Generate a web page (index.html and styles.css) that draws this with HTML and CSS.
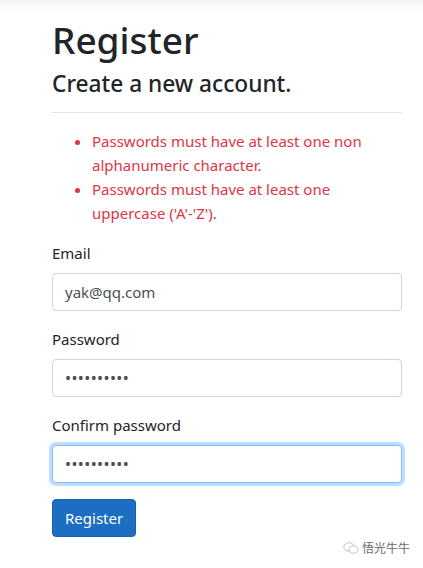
FILE: index.html
```html
<!DOCTYPE html>
<html lang="en">
<head>
<meta charset="utf-8">
<title>Register</title>
<link rel="stylesheet" href="styles.css">
</head>
<body>
<div class="shade"></div>
<main class="page">
  <h1 class="title">Register</h1>
  <h4 class="subtitle">Create a new account.</h4>
  <hr class="rule">
  <ul class="errors">
    <li>Passwords must have at least one non alphanumeric character.</li>
    <li>Passwords must have at least one uppercase ('A'-'Z').</li>
  </ul>
  <div class="group">
    <label class="label">Email</label>
    <div class="input">yak@qq.com</div>
  </div>
  <div class="group">
    <label class="label">Password</label>
    <div class="input dots">••••••••••</div>
  </div>
  <div class="group">
    <label class="label">Confirm password</label>
    <div class="input dots focus">••••••••••</div>
  </div>
  <button class="btn">Register</button>
</main>
<div class="watermark">
  <svg class="wm-icon" width="16" height="14" viewBox="0 0 16 14">
    <ellipse cx="6" cy="6" rx="5.2" ry="4.3" fill="none" stroke="#c4c4c4" stroke-width="1"/>
    <ellipse cx="10.5" cy="8.5" rx="4.5" ry="3.6" fill="#fff" stroke="#c4c4c4" stroke-width="1"/>
  </svg>
  <span>悟光牛牛</span>
</div>
</body>
</html>
```
FILE: styles.css
```css
* { box-sizing: border-box; }
html, body { margin: 0; padding: 0; background: #fff; }
body {
  font-family: "Noto Sans", "Open Sans", "Liberation Sans", sans-serif;
  color: #212529;
  font-size: 15px;
  line-height: 1.5;
  width: 423px;
  height: 568px;
  position: relative;
  overflow: hidden;
}
.shade {
  height: 12px;
  background: linear-gradient(#f3f3f3, #ffffff);
}
.page {
  padding: 0 21px 0 52px;
}
.title {
  font-size: 37px;
  font-weight: 500;
  line-height: 48px;
  margin: 4px 0 0 0;
}
.subtitle {
  font-size: 22.7px;
  font-weight: 500;
  line-height: 28px;
  margin: 6px 0 0 0;
}
.rule {
  border: 0;
  border-top: 1px solid #e3e3e3;
  margin: 14px 0 16px 0;
}
.errors {
  color: #dc3545;
  margin: 0 0 16px 0;
  padding-left: 40px;
  line-height: 24px;
}
.group {
  margin-bottom: 16px;
}
.label {
  display: block;
  margin-bottom: 8px;
  line-height: 24px;
}
.input {
  height: 38px;
  border: 1px solid #ced4da;
  border-radius: 4px;
  padding: 6px 12px;
  color: #495057;
  line-height: 24px;
}
.dots {
  font-size: 16px;
  letter-spacing: 0.4px;
  line-height: 24px;
}
.focus {
  border-color: #80bdff;
  box-shadow: 0 0 0 3px rgba(0, 123, 255, 0.25);
}
.btn {
  display: block;
  font-family: inherit;
  font-size: 15px;
  line-height: 24px;
  color: #fff;
  background: #1b6ec2;
  border: 1px solid #1861ac;
  border-radius: 4px;
  padding: 6px 12px;
  height: 38px;
}
.watermark {
  position: absolute;
  right: 13px;
  bottom: 12px;
  display: flex;
  align-items: center;
  gap: 3px;
  font-family: "Noto Sans CJK SC", sans-serif;
  font-size: 12px;
  color: #6a6a6a;
  line-height: 16px;
}
```
